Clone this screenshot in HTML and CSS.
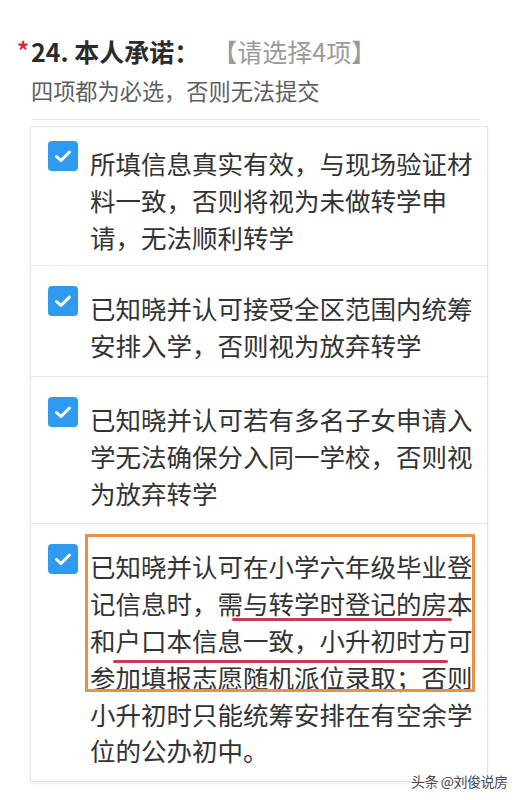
FILE: index.html
```html
<!DOCTYPE html>
<html lang="zh-CN">
<head>
<meta charset="utf-8">
<link rel="stylesheet" href="styles.css">
</head>
<body>
<div class="page">
  <div class="title-row">
    <span class="star">*</span>
    <span class="title">24. 本人承诺：</span>
    <span class="hint">【请选择4项】</span>
  </div>
  <div class="subtitle">四项都为必选，否则无法提交</div>
  <div class="rule"></div>
  <div class="card">
    <div class="item first">
      <span class="cb"><svg viewBox="0 0 30 30" width="30" height="30"><polyline points="8.5,15.5 13,19.5 21.5,11" fill="none" stroke="#fff" stroke-width="3" stroke-linecap="round" stroke-linejoin="round"/></svg></span>
      <div class="text">所填信息真实有效，与现场验证材料一致，否则将视为未做转学申请，无法顺利转学</div>
    </div>
    <div class="item">
      <span class="cb"><svg viewBox="0 0 30 30" width="30" height="30"><polyline points="8.5,15.5 13,19.5 21.5,11" fill="none" stroke="#fff" stroke-width="3" stroke-linecap="round" stroke-linejoin="round"/></svg></span>
      <div class="text">已知晓并认可接受全区范围内统筹安排入学，否则视为放弃转学</div>
    </div>
    <div class="item">
      <span class="cb"><svg viewBox="0 0 30 30" width="30" height="30"><polyline points="8.5,15.5 13,19.5 21.5,11" fill="none" stroke="#fff" stroke-width="3" stroke-linecap="round" stroke-linejoin="round"/></svg></span>
      <div class="text">已知晓并认可若有多名子女申请入学无法确保分入同一学校，否则视为放弃转学</div>
    </div>
    <div class="item last">
      <span class="cb"><svg viewBox="0 0 30 30" width="30" height="30"><polyline points="8.5,15.5 13,19.5 21.5,11" fill="none" stroke="#fff" stroke-width="3" stroke-linecap="round" stroke-linejoin="round"/></svg></span>
      <div class="text marked">已知晓并认可在小学六年级毕业登记信息时，需与转学时登记的房本和户口本信息一致，小升初时方可参加填报志愿随机派位录取；否则小升初时只能统筹安排在有空余学位的公办初中。<span class="box"></span><span class="uline u1"></span><span class="uline u2"></span></div>
    </div>
  </div>
  <div class="watermark">头条 @刘俊说房</div>
</div>
</body>
</html>
```
FILE: styles.css
```css
html, body {
  margin: 0;
  padding: 0;
  background: #fff;
}
body {
  font-family: "Noto Sans CJK SC", "Noto Sans", sans-serif;
  color: #333;
}
.page {
  position: relative;
  width: 518px;
  height: 800px;
  overflow: hidden;
}
.title-row {
  display: flex;
  align-items: flex-start;
  padding: 36px 0 0 17px;
  height: 30px;
  line-height: 30px;
}
.star {
  width: 14px;
  color: #d2303c;
  font-size: 24px;
  font-weight: 700;
  line-height: 28px;
}
.title {
  font-size: 25px;
  font-weight: 700;
  color: #2b2b2b;
}
.hint {
  font-size: 25px;
  color: #9a9a9a;
  margin-left: 13px;
}
.subtitle {
  margin: 9px 0 0 31px;
  font-size: 22.2px;
  line-height: 30px;
  color: #5e5e5e;
}
.rule {
  margin: 14px 0 0 32px;
  width: 448px;
  height: 1px;
  background: #e3e3e3;
}
.card {
  margin: 6px 0 0 30px;
  width: 456px;
  border: 1px solid #e4e4e4;
  box-shadow: 0 2px 3px rgba(0,0,0,0.06);
  background: #fff;
}
.item {
  display: flex;
  align-items: flex-start;
  padding: 20px 12px 12px 17px;
  border-bottom: 1px solid #e9e9e9;
}
.item.first {
  padding-top: 14px;
  padding-bottom: 10px;
}
.item.last {
  border-bottom: none;
  padding-bottom: 12px;
}
.cb {
  flex: none;
  width: 30px;
  height: 30px;
  border-radius: 4px;
  background: #2e9bf0;
  display: block;
}
.cb svg {
  display: block;
}
.text {
  width: 385px;
  margin-left: 12px;
  margin-top: 4px;
  font-size: 25.5px;
  line-height: 36.8px;
  color: #333;
}
.marked {
  position: relative;
}
.box {
  position: absolute;
  left: -5px;
  top: -14px;
  width: 384px;
  height: 152px;
  border: 3px solid #ec8f43;
}
.uline {
  position: absolute;
  height: 3px;
  background: #c93a55;
  border-radius: 2px;
}
.u1 {
  left: 142px;
  top: 70px;
  width: 220px;
}
.u2 {
  left: 23px;
  top: 112px;
  width: 335px;
}
.watermark {
  position: absolute;
  left: 411px;
  top: 772px;
  font-size: 14px;
  line-height: 18px;
  color: #4a4a4a;
  letter-spacing: -0.5px;
}
```
